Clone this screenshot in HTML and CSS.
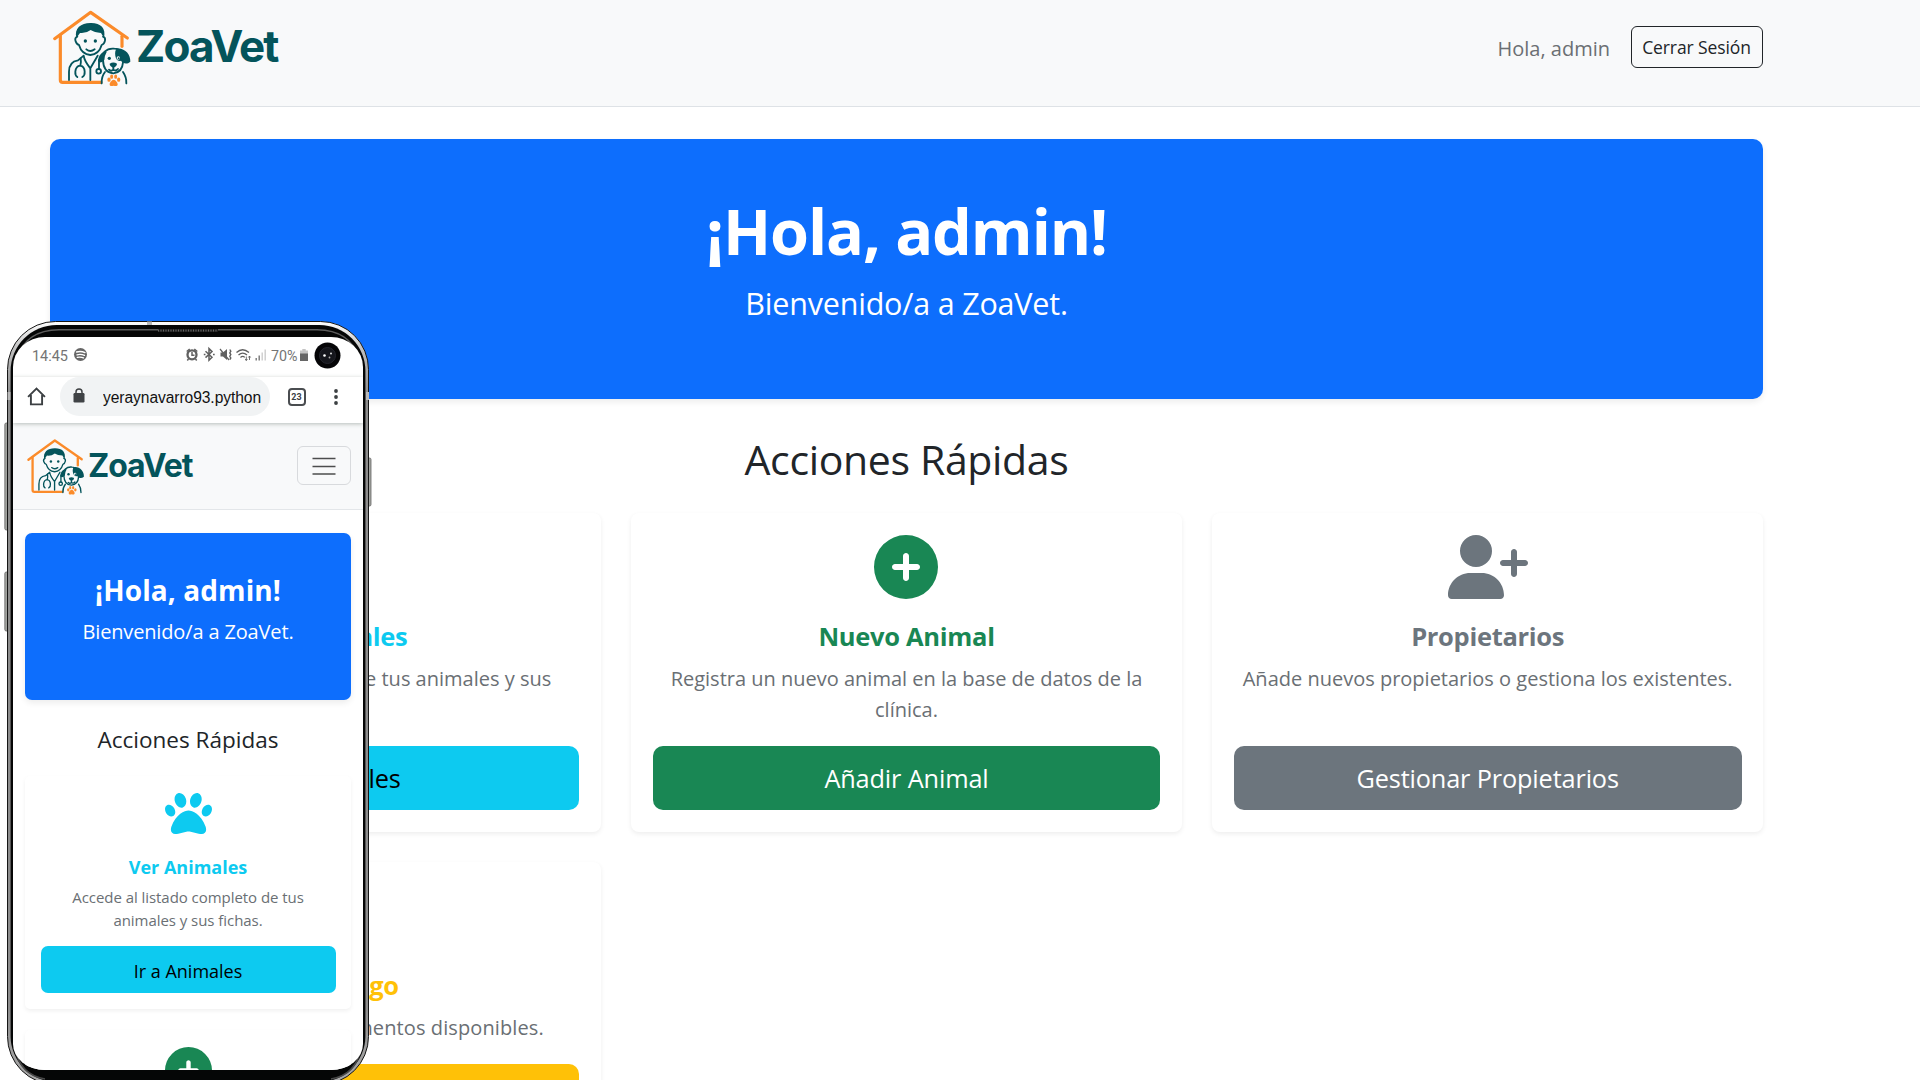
FILE: index.html
```html
<!DOCTYPE html>
<html lang="es">
<head>
<meta charset="utf-8">
<title>ZoaVet</title>
<link rel="stylesheet" href="styles.css">
</head>
<body>
<svg class="defs" width="0" height="0" aria-hidden="true">
  <symbol id="logo" viewBox="0 0 270 255">
    <g fill="none" stroke="#fb8b2a" stroke-width="9.500" stroke-linecap="round" stroke-linejoin="round">
      <path d="M14 101 122 22 232 99"/>
      <path d="M31 92V225q0 7 7 7H153"/>
      <path d="M216 94V124"/>
    </g>
    <g fill="none" stroke="#04545b" stroke-width="5.500" stroke-linecap="round" stroke-linejoin="round">
      <path d="M82 95Q73 99 77 109T87 120Q95 148 121 150 147 148 155 120 163 117 165 107T159 95"/>
      <path d="M109 133q12 10 25 0"/>
      <path d="M57 225V200Q57 170 84 166L101 152M101 152Q103 168 121 190L143 152M121 190V225"/>
      <path d="M92 160Q94 172 91 182M82 216q-7-4-6-16 2-17 14-18 13 1 14 18 1 12-7 16" />
      <circle cx="146" cy="199" r="7"/><path d="M147 165V191"/>
      <path d="M159 165Q160 203 190 205 217 202 219 172"/>
      <path d="M164 140Q175 129 193 131 208 131 216 141"/>
      <path d="M165 201Q154 215 155 235M219 201Q230 217 229 235"/>
      <path d="M190 186V195M177 194Q183 200 190 194 197 200 204 192"/>
    </g>
    <g fill="#04545b">
      <path d="M79 99C72 70 93 54 121 54c30-1 48 15 41 45l-9-15q-20-2-31-9-14 11-32 9z"/>
      <circle cx="106" cy="108" r="5"/><circle cx="136" cy="108" r="5"/>
      <path d="M166 137C152 143 143 157 145 169q8 8 18-4 1-14 7-24z"/>
      <path d="M200 131c25-3 42 18 41 39-10 9-22 6-28-3-18 7-22-29-13-36z"/>
      <circle cx="178" cy="160" r="5"/>
      <path d="M179 176q11-7 22 0 0 8-11 12-11-4-11-12z"/>
    </g>
    <circle cx="205" cy="159" r="5" fill="#f8f9fa"/><circle cx="206" cy="160" r="3" fill="#04545b"/>
    <g fill="#fb8b2a">
      <ellipse cx="177" cy="224" rx="5" ry="6.500"/><ellipse cx="185" cy="215" rx="4.500" ry="6.500"/>
      <ellipse cx="197" cy="215" rx="4.500" ry="6.500"/><ellipse cx="206" cy="224" rx="5" ry="6.500"/>
      <path d="M191 224c-6 0-13 10-12 15 2 7 8 3 12 3s10 4 12-3c1-5-6-15-12-15z"/>
    </g>
  </symbol>
  <symbol id="circle-plus" viewBox="0 0 512 512"><path d="M256 512A256 256 0 1 0 256 0a256 256 0 1 0 0 512zM232 344V280H168c-13.3 0-24-10.7-24-24s10.7-24 24-24h64V168c0-13.3 10.7-24 24-24s24 10.7 24 24v64h64c13.3 0 24 10.7 24 24s-10.7 24-24 24H280v64c0 13.3-10.7 24-24 24s-24-10.7-24-24z"/></symbol>
  <symbol id="user-plus" viewBox="0 0 640 512"><path d="M96 128a128 128 0 1 1 256 0A128 128 0 1 1 96 128zM0 482.3C0 383.8 79.8 304 178.3 304h91.4C368.2 304 448 383.8 448 482.3c0 16.4-13.3 29.7-29.7 29.7H29.7C13.3 512 0 498.7 0 482.3zM504 312V248H440c-13.3 0-24-10.7-24-24s10.7-24 24-24h64V136c0-13.3 10.7-24 24-24s24 10.7 24 24v64h64c13.3 0 24 10.7 24 24s-10.7 24-24 24H552v64c0 13.3-10.7 24-24 24s-24-10.7-24-24z"/></symbol>
  <symbol id="paw" viewBox="0 0 512 512"><path d="M226.5 92.9c14.3 42.9-.3 86.2-32.6 96.8s-70.1-15.6-84.4-58.5s.3-86.2 32.6-96.8s70.1 15.6 84.4 58.5zM100.4 198.6c18.9 32.4 14.3 70.1-10.2 84.1s-59.7-.9-78.5-33.3S-2.7 179.3 21.8 165.3s59.7 .9 78.5 33.3zM69.2 401.2C121.6 259.9 214.7 224 256 224s134.4 35.9 186.8 177.2c3.6 9.7 5.2 20.1 5.2 30.5v1.6c0 25.8-20.9 46.7-46.7 46.7c-11.5 0-22.9-1.4-34-4.2l-88-22c-15.3-3.8-31.3-3.8-46.6 0l-88 22c-11.1 2.8-22.5 4.2-34 4.2C84.9 480 64 459.1 64 433.3v-1.6c0-10.4 1.6-20.8 5.2-30.5zM421.8 282.7c-24.5-14-29.1-51.7-10.2-84.1s54-47.3 78.5-33.3s29.1 51.7 10.2 84.1s-54 47.3-78.5 33.3zM310.1 189.7c-32.3-10.6-46.9-53.9-32.6-96.8s52.1-69.1 84.4-58.5s46.9 53.9 32.6 96.8s-52.1 69.1-84.4 58.5z"/></symbol>
</svg>

<div class="page">
<header class="navbar">
  <div class="container nav-row">
    <a class="brand"><svg class="brand-mark"><use href="#logo"/></svg><span class="brand-name">ZoaVet</span></a>
    <div class="nav-user"><span class="greeting">Hola, admin</span><a class="logout">Cerrar Sesión</a></div>
  </div>
</header>
<main class="container">
  <section class="hero">
    <h1>¡Hola, admin!</h1>
    <p>Bienvenido/a a ZoaVet.</p>
  </section>
  <h2 class="section-title">Acciones Rápidas</h2>
  <div class="cards">
    <article class="card info">
      <svg class="icon"><use href="#paw"/></svg>
      <h3>Ver Animales</h3>
      <p>Accede al listado completo de tus animales y sus fichas.</p>
      <a class="btn">Ir a Animales</a>
    </article>
    <article class="card success">
      <svg class="icon"><use href="#circle-plus"/></svg>
      <h3>Nuevo Animal</h3>
      <p>Registra un nuevo animal en la base de datos de la clínica.</p>
      <a class="btn">Añadir Animal</a>
    </article>
    <article class="card secondary">
      <svg class="icon"><use href="#user-plus"/></svg>
      <h3>Propietarios</h3>
      <p>Añade nuevos propietarios o gestiona los existentes.</p>
      <a class="btn">Gestionar Propietarios</a>
    </article>
    <article class="card warning">
      <svg class="icon"><use href="#circle-plus"/></svg>
      <h3>Mi Catálogo</h3>
      <p>Consulta todos los medicamentos disponibles.</p>
      <a class="btn"></a>
    </article>
  </div>
</main>
</div>

<aside class="phone">
  <svg class="frame" viewBox="0 0 380 770">
    <defs>
      <linearGradient id="metal" x1="0" x2="0" y1="0" y2="1">
        <stop offset="0" stop-color="#fff"/><stop offset=".04" stop-color="#bbb"/><stop offset=".1" stop-color="#8d8d8d"/><stop offset=".9" stop-color="#8d8d8d"/><stop offset="1" stop-color="#aaa"/>
      </linearGradient>
    </defs>
    <g fill="#a2a4a0" stroke="#666" stroke-width=".8">
      <rect x="4.800" y="103" width="5" height="107" rx="1.500"/>
      <rect x="4.800" y="252" width="5" height="59" rx="1.500"/>
      <rect x="366" y="138" width="5" height="48" rx="1.500"/>
    </g>
    <rect x="7.500" y="1.500" width="361" height="763" rx="48" fill="url(#metal)" stroke="#161616"/>
    <rect x="10.600" y="5" width="354.800" height="757" rx="46" fill="#050606"/>
    <path d="M17 38Q26 10 59 9.700H317Q350 10 359 38" fill="none" stroke="#5c5c5c" stroke-width="1.500"/>
    <path d="M15 728Q20 755 45 759M361 728Q356 755 331 759" fill="none" stroke="#484848" stroke-width="1.500"/>
    <path d="M158 10.500H218" stroke="#1b1b1b" stroke-width="3"/><path d="M158 10.500H218" stroke="#666" stroke-width="2" stroke-dasharray="1 1.500"/>
    <path d="M147 1.500h5v3.500h-5zM7.500 72h3v8h-3zM366 72h3v8h-3z" fill="#b9b9b9"/>
  </svg>
  <div class="screen">
    <svg class="status" viewBox="13 337 350 40">
      <text class="roboto" x="32" y="360.500" textLength="36" lengthAdjust="spacingAndGlyphs">14:45</text>
      <circle cx="80.500" cy="354.500" r="6.500" fill="#666"/>
      <g fill="none" stroke="#fff" stroke-width="1.300" stroke-linecap="round"><path d="M76.500 352q4.500-1.200 8.500.6M77 354.800q4-1 7.500.6M77.300 357.300q3.500-.7 6.200.6"/></g>
      <g fill="none" stroke="#606060" stroke-width="1.500">
        <circle cx="192" cy="354.800" r="4.500" stroke-width="2.300"/><path d="M192 352v3.200h2.500M186.700 351.500l3-2.500M197.300 351.500l-3-2.500M188.500 359l-1.200 1.500M195.500 359l1.200 1.500"/>
        <path d="M205.500 351.200l6.500 6-3 3v-11.600l3 3-6.500 6M203.800 354.500h1.700M213 354.500h1.700" stroke-width="1.500"/>
        <path d="M220 349l9 11" stroke-width="1.200"/><path d="M229.800 349.500l1 1.700-1 1.700 1 1.700-1 1.700 1 1.700-1 1.700" stroke-width="1.400"/>
        <path d="M236.500 352.500q6-5.500 12.500 0M238.500 355q4.200-3.600 8.500 0M240.500 357.400q2.200-2 4.300 0" stroke-width="1.300"/>
        <path d="M246.300 356.500v4M249.500 356v4M245.200 359l1.100 1.500 1.100-1.500M248.400 357.500l1.100-1.500 1.100 1.500" stroke-width=".9"/>
      </g>
      <path d="M220.500 352.500h2.500l4-3.500v11l-4-3.500h-2.500z" fill="#606060"/>
      <path d="M255.500 358h1.400v2.500h-1.400zM258.500 355.500h1.400v5h-1.400z" fill="#777"/><path d="M261.500 352.500h1.400v8h-1.400zM264.500 349.500h1.400v11h-1.400z" fill="#ccc"/>
      <text class="roboto" x="271" y="360.500" textLength="26.500" lengthAdjust="spacingAndGlyphs">70%</text>
      <path d="M300 350.500h2.300v-1.500h3.400v1.500h2.300v3.500h-8z" fill="#c4c4c4"/><path d="M300 353.500h8v7.500h-8z" fill="#666"/>
      <circle cx="327.500" cy="355.500" r="13" fill="#050507"/><circle cx="327.500" cy="355.500" r="8" fill="#15161c" stroke="#24252d"/><circle cx="324.500" cy="355.500" r="1.300" fill="#fff"/><circle cx="329.500" cy="357.500" r=".9" fill="#aaa"/><circle cx="331" cy="353.500" r="1" fill="#ddd"/>
    </svg>
    <div class="browser">
      <svg class="home" viewBox="0 0 18 18"><path d="M1 9.300 9 1.500 17 9.300M3.700 7.500V16.500H14.300V7.500" fill="none" stroke="#3c4043" stroke-width="1.800"/></svg>
      <div class="url">
        <svg class="lock" viewBox="0 0 12 15"><rect x=".5" y="5" width="11" height="9.500" rx="1.200" fill="#3f4245"/><path d="M3 6V4a3 3 0 0 1 6 0v2" fill="none" stroke="#3f4245" stroke-width="1.500"/></svg>
        <span class="address">yeraynavarro93.python</span>
      </div>
      <span class="tabs">23</span>
      <svg class="dots" viewBox="0 0 4 16" fill="#3c4043"><circle cx="2" cy="2" r="1.900"/><circle cx="2" cy="8" r="1.900"/><circle cx="2" cy="14" r="1.900"/></svg>
    </div>
    <div class="m-nav">
      <a class="brand"><svg class="brand-mark"><use href="#logo"/></svg><span class="brand-name">ZoaVet</span></a>
      <div class="toggler"><svg viewBox="0 0 24 18"><path d="M.5 1.500H23.500M.5 9.500H23.500M.5 17H23.500" stroke="#4c4d4e" stroke-width="1.600"/></svg></div>
    </div>
    <div class="m-body">
      <section class="hero">
        <h1>¡Hola, admin!</h1>
        <p>Bienvenido/a a ZoaVet.</p>
      </section>
      <h2 class="section-title">Acciones Rápidas</h2>
      <article class="card info">
        <svg class="icon"><use href="#paw"/></svg>
        <h3>Ver Animales</h3>
        <p>Accede al listado completo de tus animales y sus fichas.</p>
        <a class="btn">Ir a Animales</a>
      </article>
      <article class="card success">
        <svg class="icon"><use href="#circle-plus"/></svg>
      </article>
    </div>
  </div>
</aside>
</body>
</html>
```
FILE: styles.css
```css
* { box-sizing: border-box; }
body {
  margin: 0;
  background: #fff;
  color: #212529;
  font-family: "Open Sans", "Noto Sans", sans-serif;
}
h1, h2, h3, p { margin: 0; }
.defs { position: absolute; }
.page { height: 1080px; overflow: hidden; }
.container { width: 1713px; margin-left: 50px; }

.navbar { height: 107px; background: #f8f9fa; border-bottom: 1px solid #dee2e6; }
.nav-row { display: flex; justify-content: space-between; align-items: flex-start; }
.brand { display: flex; color: #04545b; }
.brand-mark { width: 90px; height: 85px; margin-top: 5px; }
.brand-name { font: 700 44px/50px Inter, sans-serif; margin: 21px 0 0 -4px; letter-spacing: -1.8px; }
.nav-user { display: flex; align-items: center; gap: 21px; padding-top: 26px; }
.greeting { padding-top: 3px; font-size: 20px; line-height: 32px; color: #6b6f73; }
.logout {
  display: flex; align-items: center; justify-content: center;
  width: 132px; height: 42px; padding-right: 1px;
  border: 1.3px solid #212529; border-radius: 6px;
  font-size: 17.5px; letter-spacing: -0.1px;
}

.hero {
  height: 260px; margin-top: 32px; padding-top: 54px;
  border-radius: 10px; background: #0d6efd; color: #fff; text-align: center;
  box-shadow: 0 3px 6px rgba(0, 0, 0, .075);
}
.hero h1 { font-size: 63px; line-height: 76px; font-weight: 700; letter-spacing: -1.1px; }
.hero p { margin-top: 10px; font-size: 30.5px; line-height: 48px; letter-spacing: -0.2px; }
.section-title { margin-top: 35px; font-size: 41px; line-height: 50px; font-weight: 400; text-align: center; letter-spacing: -0.35px; }
.cards { display: grid; grid-template-columns: repeat(3, 1fr); gap: 30.5px; margin-top: 29px; }
.card {
  display: flex; flex-direction: column; align-items: center;
  padding: 21.5px; border-radius: 8px; text-align: center;
  background: #fff; box-shadow: 0 2px 5px rgba(0, 0, 0, .07);
}
.icon { width: 80px; height: 64px; fill: currentColor; }
.card h3 { margin-top: 21px; font-size: 25.5px; line-height: 32px; font-weight: 700; letter-spacing: -0.3px; }
.card p { margin: 11px 0 20.5px; font-size: 20px; line-height: 31.7px; color: #6a6f74; }
.btn {
  display: flex; align-items: center; justify-content: center;
  align-self: stretch; height: 64px; margin-top: auto;
  border-radius: 10px; font-size: 25.3px; color: #fff; letter-spacing: -0.15px;
}
.info { color: #0dcaf0; }
.info .btn { background: #0dcaf0; color: #000; }
.success { color: #198754; }
.success .btn { background: #198754; }
.secondary { color: #6c757d; }
.secondary .btn { background: #6c757d; }
.warning { color: #ffc107; }
.warning .btn { background: #ffc107; color: #000; }
.warning p { letter-spacing: 0.1px; }

/* phone laid over the desktop page */
.phone { position: absolute; left: 0; top: 320px; width: 380px; height: 760px; overflow: hidden; }
.frame { position: absolute; left: 0; top: 0; width: 380px; height: 770px; }
.screen {
  position: absolute; left: 13px; top: 17px; width: 350px; height: 732.5px;
  overflow: hidden; background: #fff;
  border-radius: 32px 32px 32px 32px / 30px 30px 26px 26px;
}
.status { display: block; width: 350px; height: 40px; }
.roboto { font: 400 15px Roboto, sans-serif; fill: #747474; }
.browser {
  position: relative;
  display: flex; align-items: center; height: 46px; padding: 0 25px 7px 14px;
  box-shadow: 0 1px 4px rgba(60, 80, 70, .35);
}
.home { width: 19px; height: 19px; }
.url {
  display: flex; align-items: center; width: 209.5px; height: 39px; margin-left: 14px;
  padding-left: 13px; border-radius: 20px; background: #f1f3f4;
}
.lock { width: 12px; height: 15px; margin-top: -2px; }
.address {
  width: 160px; margin: 2px 0 0 18px; overflow: hidden; white-space: nowrap;
  font: 15.6px/22px "Liberation Sans", sans-serif; color: #111; letter-spacing: -0.07px;
}
.tabs {
  width: 18px; height: 18px; margin-left: 18px;
  border: 2px solid #4a4d50; border-radius: 4px;
  font: 700 9px/14px Roboto, sans-serif; text-align: center; color: #3c4043;
}
.dots { width: 4px; height: 16px; margin-left: auto; }
.m-nav {
  display: flex; justify-content: space-between; align-items: center; height: 87px;
  padding: 0 12.5px 1px 12px; background: #f8f9fa; border-bottom: 1px solid #e3e6e9;
}
.m-nav .brand-mark { width: 66px; height: 62.5px; margin-top: 1px; }
.m-nav .brand-name { font-size: 32px; line-height: 40px; margin: 12px 0 0 -3px; letter-spacing: -1.1px; }
.toggler {
  display: flex; align-items: center; justify-content: center;
  width: 54px; height: 39px; border: 1px solid #d8dadd; border-radius: 6px;
}
.toggler svg { width: 24px; height: 18px; }
.m-body { padding: 0 12px; }
.m-body .hero { height: 167px; margin-top: 23px; padding-top: 39px; border-radius: 7px; }
.m-body .hero h1 { font-size: 28px; line-height: 36px; letter-spacing: 0.1px; }
.m-body .hero p { margin-top: 8px; font-size: 20px; line-height: 32px; letter-spacing: -0.15px; }
.m-body .section-title { margin-top: 24px; font-size: 22.5px; line-height: 32px; letter-spacing: 0; }
.m-body .card { margin-top: 20px; padding: 14px 15.5px 16px; border-radius: 5px; box-shadow: 0 2px 4px rgba(0, 0, 0, .06); }
.m-body .icon { width: 47px; height: 47px; }
.m-body .card h3 { margin-top: 17.5px; font-size: 18px; line-height: 24px; letter-spacing: 0; }
.m-body .card p { margin: 7px 0 14.5px; font-size: 15px; line-height: 23px; letter-spacing: -0.05px; }
.m-body .btn { height: 47px; padding-top: 3px; border-radius: 7px; font-size: 18px; letter-spacing: 0; }
.m-body .card + .card { margin-top: 21px; padding-top: 17px; }
```
